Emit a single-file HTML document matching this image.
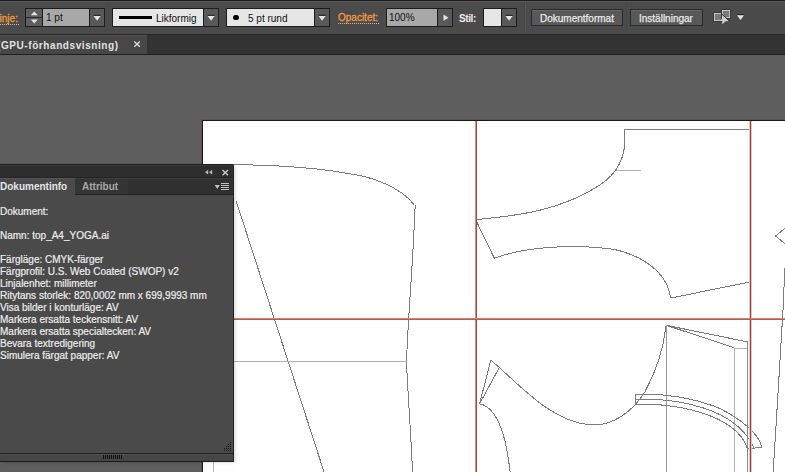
<!DOCTYPE html>
<html><head><meta charset="utf-8">
<style>
*{box-sizing:border-box;margin:0;padding:0}
html,body{width:785px;height:472px;overflow:hidden;background:#5e5e5e;font-family:"Liberation Sans",sans-serif;font-size:10px;position:relative}
.a{position:absolute}
#tb{left:0;top:0;width:785px;height:35px;background:#4b4b4b}
#tbt{left:0;top:0;width:785px;height:1px;background:#1c1c1c}
#tbb{left:0;top:34px;width:785px;height:1px;background:#282828}
#tabs{left:0;top:35px;width:785px;height:20px;background:#333333;border-bottom:1px solid #1f1f1f}
.fld{position:absolute;top:8px;height:19px;border:1px solid #1c1c1c}
.btn{position:absolute;top:8px;height:19px;width:16px;background:#595959;border:1px solid #1c1c1c}
.pbtn{position:absolute;top:9px;height:17px;background:#585858;border:1px solid #2a2a2a;box-shadow:inset 0 1px 0 #686868}
.tri{position:absolute;left:3px;top:6px;width:0;height:0;border-left:4px solid transparent;border-right:4px solid transparent;border-top:6px solid #d8d8d8}
.lbl{position:absolute;top:12px;color:#ececec;white-space:pre}
.org{color:#ee9a40;-webkit-text-stroke:0.3px #ee9a40}
.dots{height:1px;background:repeating-linear-gradient(90deg,#cdb9a0 0 1px,transparent 1px 2px)}
#art{left:202px;top:120px;width:583px;height:352px;background:#fff;border-left:1px solid #1a1a1a;border-top:1px solid #1a1a1a}
#panel{left:0;top:164px;width:234px;height:298px;background:#4a4a4a;border-top-right-radius:3px;overflow:hidden;box-shadow:2px 1px 3px rgba(0,0,0,0.12)}
#ph{left:0;top:0;width:234px;height:14px;background:#2e2e2e;border-top:1px solid #1e1e1e;box-shadow:inset 0 1px 0 #3a3a3a;border-bottom:1px solid #242424}
#ptabs{left:0;top:14px;width:234px;height:17px;background:#303030;border-top:1px solid #3c3c3c;border-bottom:1px solid #222}
#ptab1{left:0;top:14px;width:75px;height:17px;background:#4a4a4a;border-top:1px solid #575757}
#ptab2{left:75px;top:14px;width:53px;height:16px;background:#353535;border-top:1px solid #3e3e3e}
#pbr{left:233px;top:0;width:1px;height:298px;background:#222}
#pbot{left:0;top:289px;width:234px;height:9px;background:#464646;border-top:1px solid #1e1e1e;border-bottom:1px solid #1c1c1c;box-shadow:inset 0 1px 0 #525252}
.pt{position:absolute;color:#ececec;-webkit-text-stroke:0.2px #ececec;white-space:pre;line-height:12px;left:0}
</style></head><body>
<div id="tb" class="a">
  <div id="tbt" class="a"></div><div class="a" style="left:0;top:1px;width:785px;height:1px;background:#5a5a5a"></div><div id="tbb" class="a"></div>
  <div class="lbl org" style="left:-6px;top:13px;line-height:11px">Linje:</div><div class="a dots" style="left:0;top:24px;width:19px"></div>
  <div class="fld" style="left:25px;width:18px;background:#5e5e5e"><div class="a" style="left:0;top:8px;width:16px;height:1px;background:#2a2a2a"></div>
    <svg class="a" style="left:0;top:0" width="16" height="17"><path d="M4.8 6.2 H11.8 L8.3 2.4 Z M4.8 10.4 H11.8 L8.3 14.6 Z" fill="#e2e2e2"/></svg></div>
  <div class="fld" style="left:42px;width:48px;background:#a8a8a8"></div>
  <div class="lbl" style="left:46px;color:#111">1 pt</div>
  <div class="btn" style="left:89px"><svg class="a" style="left:0;top:0" width="16" height="19"><path d="M3.6 6.3 H10.6" stroke="#222" stroke-width="1"/><path d="M3.6 7 H10.6 L7.1 11.8 Z" fill="#e6e6e6"/></svg></div>
  <div class="a" style="left:108px;top:3px;width:1px;height:28px;background:#474747"></div>
  <div class="fld" style="left:112px;width:92px;background:#e6e6e6"></div>
  <div class="a" style="left:119px;top:16px;width:33px;height:3px;background:#000"></div>
  <div class="lbl" style="left:156px;top:13px;color:#111">Likformig</div>
  <div class="btn" style="left:203px"><svg class="a" style="left:0;top:0" width="16" height="19"><path d="M3.6 6.3 H10.6" stroke="#222" stroke-width="1"/><path d="M3.6 7 H10.6 L7.1 11.8 Z" fill="#e6e6e6"/></svg></div>
  <div class="fld" style="left:226px;width:89px;background:#e6e6e6"></div>
  <div class="a" style="left:233px;top:14.5px;width:5.5px;height:5.5px;border-radius:50%;background:#000"></div>
  <div class="lbl" style="left:248px;top:13px;color:#111">5 pt rund</div>
  <div class="btn" style="left:314px"><svg class="a" style="left:0;top:0" width="16" height="19"><path d="M3.6 6.3 H10.6" stroke="#222" stroke-width="1"/><path d="M3.6 7 H10.6 L7.1 11.8 Z" fill="#e6e6e6"/></svg></div>
  <div class="lbl org" style="left:338px;top:12px;line-height:11px">Opacitet:</div><div class="a dots" style="left:338px;top:23px;width:41px"></div>
  <div class="fld" style="left:386px;width:52px;background:#a8a8a8"></div>
  <div class="lbl" style="left:389px;color:#111">100%</div>
  <div class="btn" style="left:437px"><svg class="a" style="left:0;top:0" width="16" height="19"><path d="M5.5 5.5 L10.5 8.7 L5.5 11.8 Z" fill="#e4e4e4"/></svg></div>
  <div class="lbl" style="left:459px;top:13px;font-weight:bold;letter-spacing:-0.4px">Stil:</div>
  <div class="fld" style="left:483px;width:19px;background:#e6e6e6"></div>
  <div class="btn" style="left:501px"><svg class="a" style="left:0;top:0" width="16" height="19"><path d="M3.6 6.3 H10.6" stroke="#222" stroke-width="1"/><path d="M3.6 7 H10.6 L7.1 11.8 Z" fill="#e6e6e6"/></svg></div>
  <div class="a" style="left:524px;top:3px;width:1px;height:28px;background:#444"></div>
  <div class="a" style="left:525px;top:3px;width:1px;height:28px;background:#5a5a5a"></div>
  <div class="pbtn" style="left:531px;width:92px"></div>
  <div class="lbl" style="left:540px;top:13px;color:#e8e8e8;-webkit-text-stroke:0.25px #e8e8e8">Dokumentformat</div>
  <div class="a" style="left:626px;top:3px;width:1px;height:28px;background:#474747"></div>
  <div class="pbtn" style="left:630px;width:73px"></div>
  <div class="lbl" style="left:639px;top:13px;color:#e8e8e8;-webkit-text-stroke:0.25px #e8e8e8">Inställningar</div>
  <svg class="a" style="left:710px;top:6px" width="40" height="22" viewBox="710 6 40 22">
    <rect x="713.5" y="12.5" width="9" height="9" fill="none" stroke="#383838" stroke-width="1"/>
    <rect x="714.5" y="13.5" width="7" height="7" fill="#7a7a7a" stroke="#c2c2c2" stroke-width="1"/>
    <rect x="721.5" y="9.5" width="9" height="9" fill="none" stroke="#383838" stroke-width="1"/>
    <rect x="722.5" y="10.5" width="7" height="7" fill="#7a7a7a" stroke="#c2c2c2" stroke-width="1"/>
    <path d="M721.9 14.2 L729.3 20.9 L725.6 21.3 L722.3 24.2 Z" fill="#d2d2d2"/>
    <path d="M721.9 14.2 L729.3 20.9" stroke="#151515" stroke-width="0.9"/>
    <rect x="714" y="13" width="1" height="1" fill="#ddd"/><rect x="714" y="20" width="1" height="1" fill="#ddd"/>
    <rect x="729" y="10" width="1" height="1" fill="#ddd"/><rect x="729" y="17" width="1" height="1" fill="#ddd"/><rect x="722" y="10" width="1" height="1" fill="#ddd"/>
    <path d="M737 14.6 H744" stroke="#222" stroke-width="1"/>
    <path d="M737 15.2 H744 L740.5 20 Z" fill="#e4e4e4"/>
  </svg>
</div>
<div id="tabs" class="a">
  <div class="a" style="left:0;top:0;width:147px;height:19px;background:#474747;border-top:1px solid #545454"></div>
  <div class="a" style="left:-3px;top:5px;color:#e2e2e2;font-weight:bold;letter-spacing:0.58px;white-space:pre">(GPU-förhandsvisning)</div>
  <svg class="a" style="left:130px;top:3px" width="14" height="14"><path d="M4.3 3.4 L9.8 8.8 M9.8 3.4 L4.3 8.8" stroke="#dcdcdc" stroke-width="1.35"/></svg>
</div>
<div id="art" class="a"></div>
<svg class="a" style="left:0;top:0" width="785" height="472" viewBox="0 0 785 472">
<g fill="none" stroke-width="1" shape-rendering="crispEdges">
<path d="M200.0 164.1 C249.8 164.7 300.9 164.8 350.0 173.8 C371.6 176.7 400.0 186.8 414.0 204.5" stroke="#7c7c7c"/>
<path d="M415.2 204.5 C413.4 256.9 408.5 309.1 406.5 361.5" stroke="#7c7c7c"/>
<path d="M406.5 361.5 C408.1 401.1 411.6 440.4 412.8 480.0" stroke="#7c7c7c"/>
<path d="M236 200.6 L326 478" stroke="#7c7c7c"/>
<path d="M234 361.5 H406.5" stroke="#b2b2b2"/>
<path d="M213.5 430 V472" stroke="#b2b2b2"/>
<path d="M751 129.5 H624.4" stroke="#7c7c7c"/>
<path d="M624.4 129.5 C627.3 152.8 619.9 171.7 600.0 185.0 C561.6 209.9 520.1 215.6 475.6 219.6" stroke="#7c7c7c"/>
<path d="M615.9 170.5 H640.6" stroke="#b2b2b2"/>
<path d="M475.6 219.6 L494.4 258.3" stroke="#7c7c7c"/>
<path d="M494.4 258.3 C526.6 246.0 575.4 244.4 610.0 248.8 C635.7 252.7 667.2 269.2 670.6 298.1" stroke="#7c7c7c"/>
<path d="M670.6 298.1 L750 281.9" stroke="#7c7c7c"/>
<path d="M490.8 360.1 L479.6 403.8 M499.3 367.5 L479.6 403.8 M490.8 360.1 L499.3 367.5" stroke="#7c7c7c"/>
<path d="M499.3 367.5 C525.0 390.7 553.4 421.4 590.0 424.8" stroke="#7c7c7c"/>
<path d="M645.0 391.7 C656.1 371.3 663.6 349.0 665.9 325.8" stroke="#7c7c7c"/>
<path d="M590.0 424.8 C613.0 427.0 633.6 410.2 645.0 391.7" stroke="#7c7c7c"/>
<path d="M479.6 403.8 C504.2 408.8 509.0 460.6 511.0 480.0" stroke="#7c7c7c"/>
<path d="M666.3 325.3 L748 342 M666.3 325.3 L734.4 347.8" stroke="#7c7c7c"/>
<path d="M734.4 348 H748" stroke="#b2b2b2"/>
<path d="M666.5 325.3 V472" stroke="#999"/>
<path d="M734.5 348 V472" stroke="#b2b2b2"/>
<path d="M747.5 342 V472" stroke="#888"/>
<path d="M635.3 394.4 V404.4" stroke="#7c7c7c"/>
<path d="M635.3 394.4 C661.8 393.3 690.0 397.3 715.0 406.4 C729.1 412.2 758.9 430.1 761.7 447.6" stroke="#7c7c7c"/>
<path d="M635.3 399.4 C674.8 397.7 736.7 407.3 754.0 448.3" stroke="#7c7c7c"/>
<path d="M635.3 404.4 C668.1 402.2 735.8 412.5 747.4 448.5" stroke="#7c7c7c"/>
<path d="M747.4 448.5 L761.7 447.6" stroke="#7c7c7c"/>
<path d="M784.6 268 L783.6 300 L777.6 400 L772.9 476" stroke="#7c7c7c"/>
<path d="M786 227.5 L775.5 236 L786 244.6" stroke="#7c7c7c"/>
</g>
<g fill="none" stroke-width="1">
<path d="M201.5 119 V472 M201 119.5 H785" stroke="rgba(110,60,60,0.35)"/>
<path d="M475.5 121 V472" stroke="#cc907e"/>
<path d="M476.5 121 V472" stroke="#9e4e3c"/>
<path d="M749.5 121 V472" stroke="#ecc8bc"/>
<path d="M751.5 121 V472" stroke="#eec4b8"/>
<path d="M750.5 121 V472" stroke="#8c4640"/>
<path d="M203 318.5 H785" stroke="#d08272"/>
<path d="M203 319.5 H785" stroke="#b45e4c"/>
</g>
</svg>
<div id="panel" class="a">
  <div id="ph" class="a"></div>
  <div id="ptabs" class="a"></div>
  <div id="ptab1" class="a"></div>
  <div id="ptab2" class="a"></div>
  <div class="a" style="left:0;top:17px;color:#e6e6e6;font-weight:bold;white-space:pre">Dokumentinfo</div>
  <div class="a" style="left:82px;top:17px;color:#a8a8a8;font-weight:bold;white-space:pre">Attribut</div>
  <div class="pt" style="top:42px">Dokument:</div>
  <div class="pt" style="top:66px">Namn: top_A4_YOGA.ai</div>
  <div class="pt" style="top:90px">Färgläge: CMYK-färger<br>Färgprofil: U.S. Web Coated (SWOP) v2<br>Linjalenhet: millimeter<br>Ritytans storlek: 820,0002 mm x 699,9993 mm<br>Visa bilder i konturläge: AV<br>Markera ersatta teckensnitt: AV<br>Markera ersatta specialtecken: AV<br>Bevara textredigering<br>Simulera färgat papper: AV</div>
  <div id="pbot" class="a"></div>
  <div id="pbr" class="a"></div>
  <svg class="a" style="left:0;top:0" width="234" height="298" viewBox="0 0 234 298">
<path d="M205 8.2 L208.2 5.8 L208.2 10.6 Z M209 8.2 L212.2 5.8 L212.2 10.6 Z" fill="#b8b8b8"/>
<path d="M222.5 6 L228 11.2 M228 6 L222.5 11.2" stroke="#c8c8c8" stroke-width="1.4"/>
<path d="M214.7 21 H219.8 L217.25 25 Z" fill="#c0c0c0"/>
<path d="M221 19.5 H229 M221 21.5 H229 M221 23.5 H229 M221 25.5 H229" stroke="#c0c0c0" stroke-width="1"/>
<rect x="103" y="291" width="1" height="4" fill="#111"/><rect x="105" y="291" width="1" height="4" fill="#111"/><rect x="107" y="291" width="1" height="4" fill="#111"/><rect x="109" y="291" width="1" height="4" fill="#111"/><rect x="111" y="291" width="1" height="4" fill="#111"/><rect x="113" y="291" width="1" height="4" fill="#111"/><rect x="115" y="291" width="1" height="4" fill="#111"/><rect x="117" y="291" width="1" height="4" fill="#111"/><rect x="119" y="291" width="1" height="4" fill="#111"/><rect x="121" y="291" width="1" height="4" fill="#111"/><rect x="230.0" y="278" width="1" height="1" fill="#111"/><rect x="228.0" y="280" width="1" height="1" fill="#111"/><rect x="230.0" y="280" width="1" height="1" fill="#111"/><rect x="226.0" y="282" width="1" height="1" fill="#111"/><rect x="228.0" y="282" width="1" height="1" fill="#111"/><rect x="230.0" y="282" width="1" height="1" fill="#111"/><rect x="224.0" y="284" width="1" height="1" fill="#111"/><rect x="226.0" y="284" width="1" height="1" fill="#111"/><rect x="228.0" y="284" width="1" height="1" fill="#111"/><rect x="230.0" y="284" width="1" height="1" fill="#111"/><rect x="224.0" y="286" width="1" height="1" fill="#111"/><rect x="226.0" y="286" width="1" height="1" fill="#111"/><rect x="228.0" y="286" width="1" height="1" fill="#111"/><rect x="230.0" y="286" width="1" height="1" fill="#111"/>
</svg>
</div>
</body></html>
